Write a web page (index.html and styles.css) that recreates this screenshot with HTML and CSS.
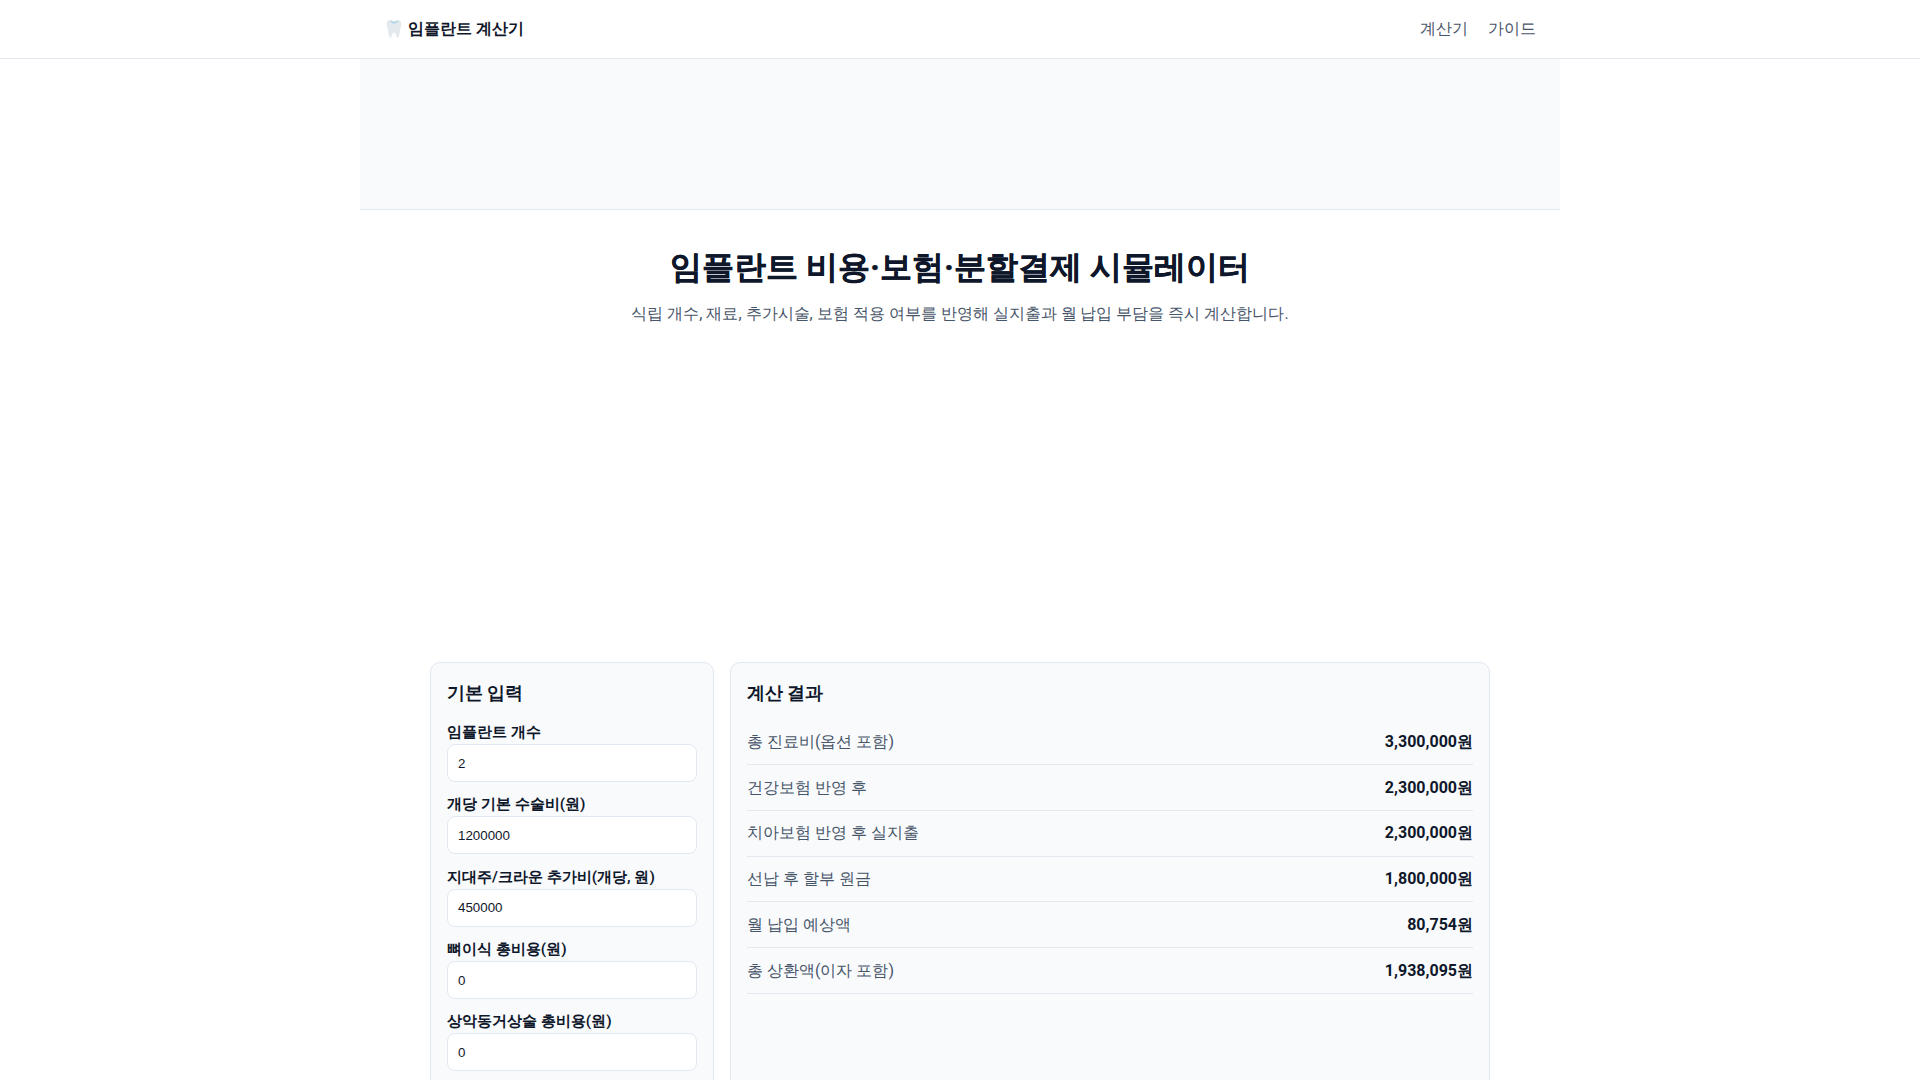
FILE: index.html
```html
<!DOCTYPE html>
<html lang="ko">
<head>
    <meta charset="UTF-8">
    <meta name="viewport" content="width=device-width, initial-scale=1.0">
    <title>임플란트 계산기</title>
    <link rel="stylesheet" href="styles.css">
</head>
<body>
    <header class="site-header">
        <div class="header-inner">
            <a class="brand" href="#">
                <svg class="brand-icon" viewBox="0 0 16 20" width="16" height="20" aria-hidden="true">
                    <path d="M4 1C1.8 1 .6 2.800 .6 5.200c0 2.400 1 3.800 1.400 5.800.4 2.400.6 7.600 2.400 7.600 1.500 0 1.300-5.200 3.600-5.200s2.100 5.200 3.600 5.200c1.800 0 2-5.200 2.400-7.600.4-2 1.400-3.400 1.400-5.800C15.400 2.800 14.200 1 12 1c-1.600 0-2.500.8-4 .8S5.600 1 4 1z" fill="#e3e9ec"/>
                    <path d="M3.500 1.800c1.600 0 3 1.100 4.500 1.100s2.900-1.100 4.500-1.100c-.8 1.300-2.600 2.600-4.500 2.600S4.300 3.100 3.500 1.800z" fill="#a9d3e6"/>
                </svg>
                임플란트 계산기
            </a>
            <nav class="nav">
                <a href="#">계산기</a>
                <a href="#">가이드</a>
            </nav>
        </div>
    </header>

    <div class="top-slot"></div>

    <section class="hero">
        <h1>임플란트 비용·보험·분할결제 시뮬레이터</h1>
        <p>식립 개수, 재료, 추가시술, 보험 적용 여부를 반영해 실지출과 월 납입 부담을 즉시 계산합니다.</p>
    </section>

    <div class="mid-slot"></div>

    <main class="calc-grid">
        <section class="card input-card">
            <h2>기본 입력</h2>
            <div class="field">
                <label for="count">임플란트 개수</label>
                <input type="text" id="count" value="2">
            </div>
            <div class="field">
                <label for="base">개당 기본 수술비(원)</label>
                <input type="text" id="base" value="1200000">
            </div>
            <div class="field">
                <label for="crown">지대주/크라운 추가비(개당, 원)</label>
                <input type="text" id="crown" value="450000">
            </div>
            <div class="field">
                <label for="bone">뼈이식 총비용(원)</label>
                <input type="text" id="bone" value="0">
            </div>
            <div class="field">
                <label for="sinus">상악동거상술 총비용(원)</label>
                <input type="text" id="sinus" value="0">
            </div>
        </section>

        <section class="card">
            <h2>계산 결과</h2>
            <div class="result-row"><span>총 진료비(옵션 포함)</span><strong>3,300,000원</strong></div>
            <div class="result-row"><span>건강보험 반영 후</span><strong>2,300,000원</strong></div>
            <div class="result-row"><span>치아보험 반영 후 실지출</span><strong>2,300,000원</strong></div>
            <div class="result-row"><span>선납 후 할부 원금</span><strong>1,800,000원</strong></div>
            <div class="result-row"><span>월 납입 예상액</span><strong>80,754원</strong></div>
            <div class="result-row"><span>총 상환액(이자 포함)</span><strong>1,938,095원</strong></div>
        </section>
    </main>
</body>
</html>
```

FILE: styles.css
```css
* {
    box-sizing: border-box;
}
body {
    margin: 0;
    background: #fff;
    color: #0f172a;
    font-family: Roboto, sans-serif;
    font-size: 16px;
    line-height: 1.6;
}
a {
    color: inherit;
    text-decoration: none;
}
.site-header {
    height: 59px;
    border-bottom: 1px solid #e2e8f0;
}
.header-inner {
    max-width: 1200px;
    height: 58px;
    margin: 0 auto;
    padding: 0 24px 0 26px;
    display: flex;
    align-items: center;
    justify-content: space-between;
}
.brand {
    display: flex;
    align-items: center;
    gap: 6px;
    font-weight: 700;
}
.brand-icon {
    display: block;
}
.nav {
    display: flex;
    gap: 20px;
    color: #475569;
    font-weight: 500;
}
.top-slot {
    max-width: 1200px;
    height: 151px;
    margin: 0 auto;
    background: #f8fafc;
    border-bottom: 1px solid #e2e8f0;
}
.hero {
    padding-top: 32px;
    text-align: center;
}
.hero h1 {
    margin: 0 0 8px;
    font-size: 32px;
    font-weight: 800;
    line-height: 1.6;
    -webkit-text-stroke: 0.3px #0f172a;
}
.hero p {
    margin: 0;
    color: #475569;
}
.mid-slot {
    height: 335px;
}
.calc-grid {
    max-width: 1060px;
    min-height: 500px;
    margin: 0 auto;
    display: grid;
    grid-template-columns: 284px 1fr;
    gap: 16px;
}
.card {
    padding: 16px;
    background: #f8fafc;
    border: 1px solid #e2e8f0;
    border-radius: 10px;
}
.card h2 {
    margin: 0 0 12.2px;
    font-size: 17.6px;
    font-weight: 700;
}
.input-card h2 {
    margin-bottom: 15px;
}
.field {
    margin-bottom: 12.2px;
}
.field label {
    display: block;
    font-size: 15.4px;
    font-weight: 600;
    line-height: 20.15px;
    margin-bottom: 2px;
}
.field input {
    display: block;
    width: 100%;
    height: 38px;
    padding: 0 10px;
    background: #fff;
    border: 1px solid #e2e8f0;
    border-radius: 8px;
    color: #0f172a;
    font-family: "Liberation Sans", Arial, sans-serif;
    font-size: 13.33px;
}
.result-row {
    display: flex;
    align-items: center;
    justify-content: space-between;
    height: 45.8px;
    border-bottom: 1px solid #e2e8f0;
    color: #475569;
}
.result-row strong {
    color: #0f172a;
    font-weight: 700;
}
```
